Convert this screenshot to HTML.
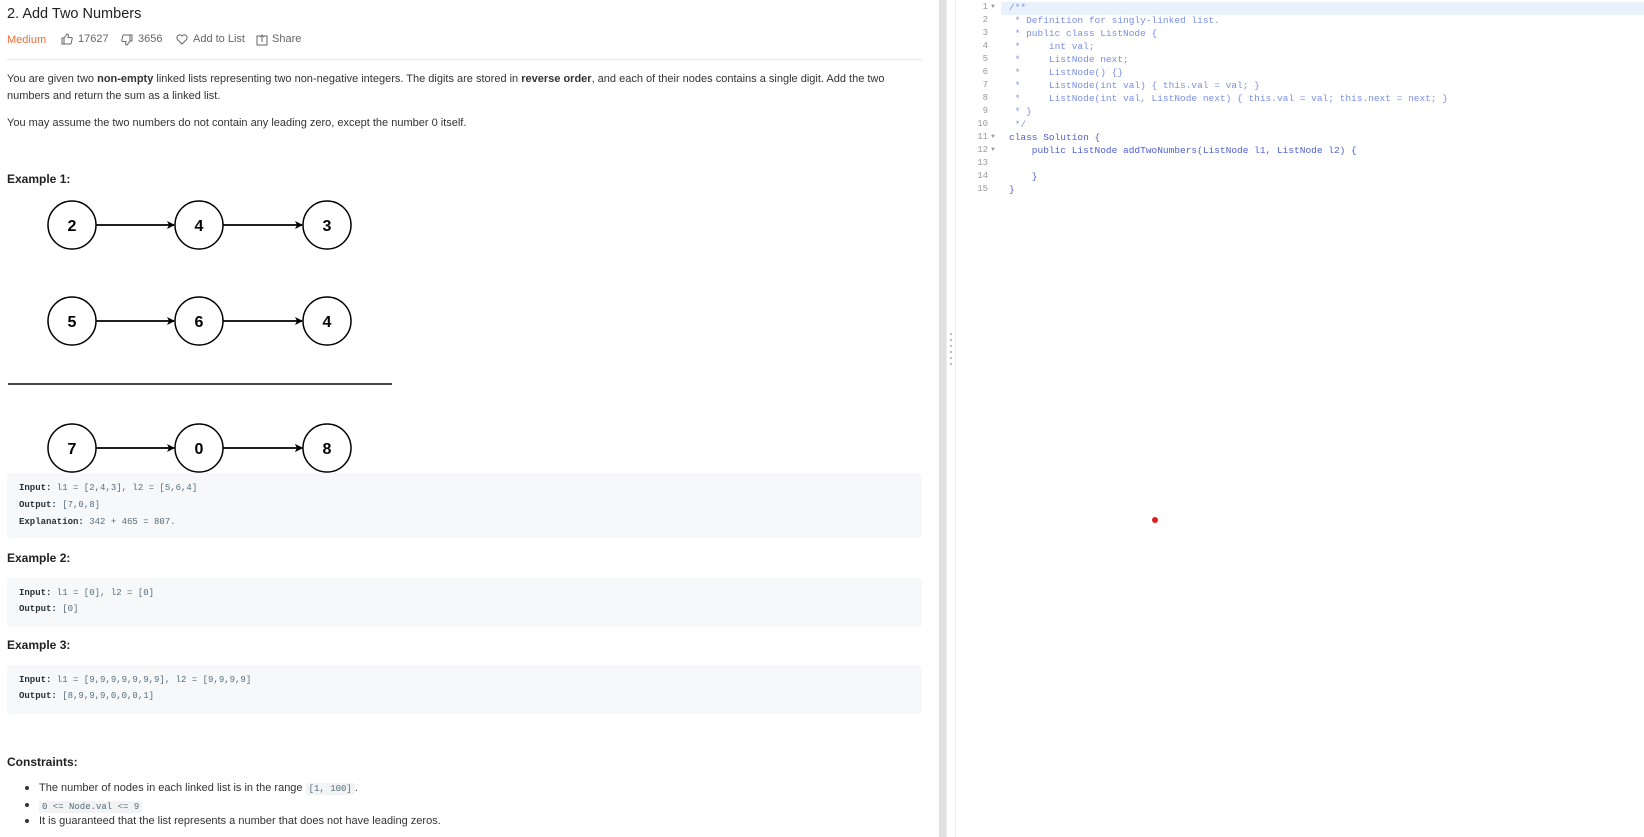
<!DOCTYPE html>
<html><head><meta charset="utf-8"><style>
*{margin:0;padding:0;box-sizing:border-box}
body{width:1644px;height:837px;overflow:hidden;background:#fff;font-family:"Liberation Sans","DejaVu Sans",sans-serif;color:#263238;position:relative}
.a{position:absolute;white-space:nowrap}
.t{font-size:11px;color:#333}
.mono{font-family:"Liberation Mono",monospace}
.box{position:absolute;left:7px;width:915px;background:#f7f8fa;border-radius:3px}
.box div{position:absolute;left:12px;font-family:"Liberation Mono",monospace;font-size:9px;color:#546e7a;white-space:nowrap}
.box b{color:#263238;font-weight:bold}
h4{position:absolute;left:7px;font-size:12px;font-weight:bold;color:#212121}
.code{position:absolute;left:1009px;font-family:"Liberation Mono",monospace;font-size:9.5px;line-height:13px;white-space:pre;color:#7a8fe6}
.ln{position:absolute;left:955px;width:33px;text-align:right;font-family:"Liberation Mono",monospace;font-size:9px;line-height:13px;color:#999;white-space:pre}
.fold{position:absolute;left:990px;font-size:6px;color:#999;line-height:13px;white-space:pre}
.ic{font-size:9px;background:#f1f3f5;padding:1px 3px;border-radius:2px;font-family:"Liberation Mono",monospace;color:#546e7a}
</style></head><body>
<div class="a" style="left:7px;top:6px;font-size:14.5px;color:#212121">2. Add Two Numbers</div>
<div class="a" style="left:7px;top:34px;font-size:11px;color:#ef6c35">Medium</div>
<svg class="a" style="left:61px;top:33px" width="12" height="12" viewBox="0 0 12 12" fill="none" stroke="#666" stroke-width="1"><path d="M1 5h2v6H1zM3 5l3-4c1 0 1.5.5 1.3 1.5L7 4.5h3.3c.7 0 1 .6.9 1.2l-1 4.5c-.1.5-.5.8-1 .8H3"/></svg>
<div class="a t" style="left:78px;top:33px;color:#666">17627</div>
<svg class="a" style="left:121px;top:34px" width="12" height="12" viewBox="0 0 12 12" fill="none" stroke="#666" stroke-width="1"><path d="M11 7H9V1h2zM9 7l-3 4c-1 0-1.5-.5-1.3-1.5L5 7.5H1.7c-.7 0-1-.6-.9-1.2l1-4.5c.1-.5.5-.8 1-.8H9"/></svg>
<div class="a t" style="left:138px;top:33px;color:#666">3656</div>
<svg class="a" style="left:176px;top:34px" width="12" height="11" viewBox="0 0 12 11" fill="none" stroke="#666" stroke-width="1"><path d="M6 10L1.5 5.5A2.5 2.5 0 0 1 6 2a2.5 2.5 0 0 1 4.5 3.5z"/></svg>
<div class="a t" style="left:193px;top:33px;color:#666">Add to List</div>
<svg class="a" style="left:256px;top:34px" width="12" height="12" viewBox="0 0 12 12" fill="none" stroke="#666" stroke-width="1"><path d="M4 2H1v9h10V2H8M6 8V1M4 3l2-2 2 2"/></svg>
<div class="a t" style="left:272px;top:33px;color:#666">Share</div>
<div class="a" style="left:7px;top:59px;width:915px;height:1px;background:#e8e8e8"></div>
<div class="a t" style="left:7px;top:73px">You are given two <b>non-empty</b> linked lists representing two non-negative integers. The digits are stored in <b>reverse order</b>, and each of their nodes contains a single digit. Add the two</div>
<div class="a t" style="left:7px;top:90px">numbers and return the sum as a linked list.</div>
<div class="a t" style="left:7px;top:117px">You may assume the two numbers do not contain any leading zero, except the number 0 itself.</div>
<h4 style="top:172px">Example 1:</h4>
<svg class="a" style="left:0;top:190px" width="420" height="290" font-family="Liberation Sans,sans-serif" font-weight="bold" font-size="16" text-anchor="middle">
<defs><marker id="m" markerWidth="8" markerHeight="8" refX="7" refY="4" orient="auto" markerUnits="userSpaceOnUse"><path d="M0 0L8 4L0 8L2 4z" fill="#000"/></marker></defs>
<g fill="none" stroke="#000" stroke-width="1.5">
<circle cx="72" cy="35" r="24"/><circle cx="199" cy="35" r="24"/><circle cx="327" cy="35" r="24"/>
<circle cx="72" cy="131" r="24"/><circle cx="199" cy="131" r="24"/><circle cx="327" cy="131" r="24"/>
<circle cx="72" cy="258" r="24"/><circle cx="199" cy="258" r="24"/><circle cx="327" cy="258" r="24"/>
<path d="M96 35H174M223 35H302M96 131H174M223 131H302M96 258H174M223 258H302" marker-end="url(#m)"/>
<path d="M96 35H174" marker-end="url(#m)"/><path d="M223 35H302" marker-end="url(#m)"/>
<path d="M96 131H174" marker-end="url(#m)"/><path d="M223 131H302" marker-end="url(#m)"/>
<path d="M96 258H174" marker-end="url(#m)"/><path d="M223 258H302" marker-end="url(#m)"/>
</g>
<rect x="8" y="193" width="384" height="2" fill="#444"/>
<g fill="#000"><text x="72" y="41">2</text><text x="199" y="41">4</text><text x="327" y="41">3</text>
<text x="72" y="137">5</text><text x="199" y="137">6</text><text x="327" y="137">4</text>
<text x="72" y="264">7</text><text x="199" y="264">0</text><text x="327" y="264">8</text></g>
</svg>
<div class="box" style="top:473px;height:65px"><div style="top:10px"><b>Input:</b> l1 = [2,4,3], l2 = [5,6,4]</div><div style="top:27px"><b>Output:</b> [7,0,8]</div><div style="top:44px"><b>Explanation:</b> 342 + 465 = 807.</div></div>
<h4 style="top:551px">Example 2:</h4>
<div class="box" style="top:578px;height:49px"><div style="top:10px"><b>Input:</b> l1 = [0], l2 = [0]</div><div style="top:26px"><b>Output:</b> [0]</div></div>
<h4 style="top:638px">Example 3:</h4>
<div class="box" style="top:665px;height:49px"><div style="top:10px"><b>Input:</b> l1 = [9,9,9,9,9,9,9], l2 = [9,9,9,9]</div><div style="top:26px"><b>Output:</b> [8,9,9,9,0,0,0,1]</div></div>
<h4 style="top:755px">Constraints:</h4>
<div class="a" style="left:25px;top:786px;width:4px;height:4px;border-radius:50%;background:#333"></div>
<div class="a" style="left:25px;top:803px;width:4px;height:4px;border-radius:50%;background:#333"></div>
<div class="a" style="left:25px;top:819px;width:4px;height:4px;border-radius:50%;background:#333"></div>
<div class="a t" style="left:39px;top:782px">The number of nodes in each linked list is in the range <span class="ic">[1, 100]</span>.</div>
<div class="a t" style="left:39px;top:800px"><span class="ic">0 &lt;= Node.val &lt;= 9</span></div>
<div class="a t" style="left:39px;top:815px">It is guaranteed that the list represents a number that does not have leading zeros.</div>
<div class="a" style="left:939px;top:0;width:7px;height:837px;background:#e0e0e0"></div>
<div class="a" style="left:946px;top:0;width:1px;height:837px;background:#eee"></div>
<div class="a" style="left:955px;top:0;width:1px;height:837px;background:#eee"></div>
<div class="a" style="left:950px;top:333px;width:2px;height:36px;background:repeating-linear-gradient(#bbb 0 2px,transparent 2px 6px)"></div>
<div class="a" style="left:1001px;top:2px;width:643px;height:13px;background:#e8f1fc"></div>
<div class="ln" style="top:1px">1
2
3
4
5
6
7
8
9
10
11
12
13
14
15</div>
<div class="fold" style="top:1px">▼









▼
▼</div>
<div class="code" style="top:1px">/**
 * Definition for singly-linked list.
 * public class ListNode {
 *     int val;
 *     ListNode next;
 *     ListNode() {}
 *     ListNode(int val) { this.val = val; }
 *     ListNode(int val, ListNode next) { this.val = val; this.next = next; }
 * }
 */
<span style="color:#4f5fd6">class Solution {
    public ListNode addTwoNumbers(ListNode l1, ListNode l2) {

    }
}</span></div>
<div class="a" style="left:1152px;top:517px;width:6px;height:6px;border-radius:50%;background:#e02020"></div>
</body></html>
